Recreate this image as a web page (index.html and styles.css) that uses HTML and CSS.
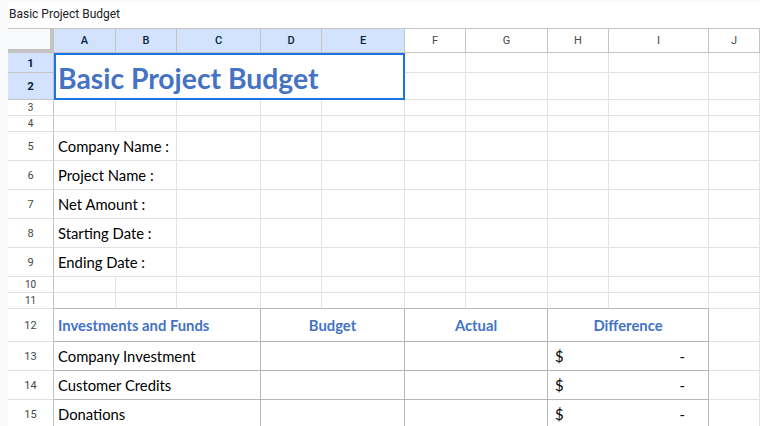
FILE: index.html
```html
<!DOCTYPE html>
<html>
<head>
<meta charset="utf-8">
<link rel="stylesheet" href="styles.css">
</head>
<body>
<div class="page">
  <div class="titlebar">Basic Project Budget</div>
  <div class="sheet">
    <!-- header row -->
    <div class="corner"></div>
    <div class="ch sel">A</div><div class="ch sel">B</div><div class="ch sel">C</div><div class="ch sel">D</div><div class="ch sel">E</div>
    <div class="ch">F</div><div class="ch">G</div><div class="ch">H</div><div class="ch">I</div><div class="ch">J</div>

    <!-- rows 1-2 -->
    <div class="rh sel">1</div>
    <div class="title-cell">Basic Project Budget</div>
    <div class="c"></div><div class="c"></div><div class="c"></div><div class="c"></div><div class="c"></div>
    <div class="rh sel">2</div>
    <div class="c"></div><div class="c"></div><div class="c"></div><div class="c"></div><div class="c"></div>

    <!-- row 3 -->
    <div class="rh small">3</div>
    <div class="c"></div><div class="c"></div><div class="c"></div><div class="c"></div><div class="c"></div><div class="c"></div><div class="c"></div><div class="c"></div><div class="c"></div><div class="c"></div>
    <!-- row 4 -->
    <div class="rh small">4</div>
    <div class="c"></div><div class="c"></div><div class="c"></div><div class="c"></div><div class="c"></div><div class="c"></div><div class="c"></div><div class="c"></div><div class="c"></div><div class="c"></div>

    <!-- rows 5-9 -->
    <div class="rh">5</div>
    <div class="c label span2">Company Name :</div><div class="c"></div><div class="c"></div><div class="c"></div><div class="c"></div><div class="c"></div><div class="c"></div><div class="c"></div><div class="c"></div>
    <div class="rh">6</div>
    <div class="c label span2">Project Name :</div><div class="c"></div><div class="c"></div><div class="c"></div><div class="c"></div><div class="c"></div><div class="c"></div><div class="c"></div><div class="c"></div>
    <div class="rh">7</div>
    <div class="c label span2">Net Amount :</div><div class="c"></div><div class="c"></div><div class="c"></div><div class="c"></div><div class="c"></div><div class="c"></div><div class="c"></div><div class="c"></div>
    <div class="rh">8</div>
    <div class="c label span2">Starting Date :</div><div class="c"></div><div class="c"></div><div class="c"></div><div class="c"></div><div class="c"></div><div class="c"></div><div class="c"></div><div class="c"></div>
    <div class="rh">9</div>
    <div class="c label span2">Ending Date :</div><div class="c"></div><div class="c"></div><div class="c"></div><div class="c"></div><div class="c"></div><div class="c"></div><div class="c"></div><div class="c"></div>

    <!-- row 10 -->
    <div class="rh small">10</div>
    <div class="c"></div><div class="c"></div><div class="c"></div><div class="c"></div><div class="c"></div><div class="c"></div><div class="c"></div><div class="c"></div><div class="c"></div><div class="c"></div>
    <!-- row 11 -->
    <div class="rh small">11</div>
    <div class="c tbb"></div><div class="c tbb"></div><div class="c tbb"></div><div class="c tbb"></div><div class="c tbb"></div><div class="c tbb"></div><div class="c tbb"></div><div class="c tbb"></div><div class="c tbb"></div><div class="c"></div>

    <!-- row 12 -->
    <div class="rh">12</div>
    <div class="c tb th span3">Investments and Funds</div>
    <div class="c tb th center span2">Budget</div>
    <div class="c tb th center span2">Actual</div>
    <div class="c tb th center span2">Difference</div>
    <div class="c"></div>

    <!-- rows 13-15 -->
    <div class="rh">13</div>
    <div class="c tb label span3">Company Investment</div>
    <div class="c tb span2"></div>
    <div class="c tb span2"></div>
    <div class="c tb span2 acct"><span>$</span><span>-</span></div>
    <div class="c"></div>

    <div class="rh">14</div>
    <div class="c tb label span3">Customer Credits</div>
    <div class="c tb span2"></div>
    <div class="c tb span2"></div>
    <div class="c tb span2 acct"><span>$</span><span>-</span></div>
    <div class="c"></div>

    <div class="rh">15</div>
    <div class="c tb label span3">Donations</div>
    <div class="c tb span2"></div>
    <div class="c tb span2"></div>
    <div class="c tb span2 acct"><span>$</span><span>-</span></div>
    <div class="c"></div>
  </div>
</div>
</body>
</html>
```

FILE: styles.css
```css
* { box-sizing: border-box; }
html, body { margin: 0; padding: 0; }
body {
  background: #f8f9fa;
  width: 760px;
  height: 426px;
  overflow: hidden;
}
.page {
  padding: 2px 0 0 8px;
}
.titlebar {
  background: #ffffff;
  height: 27px;
  padding-left: 1px;
  font-family: Roboto, "Liberation Sans", Arial, sans-serif;
  font-size: 12px;
  color: #202124;
  display: flex;
  align-items: center;
  padding-bottom: 3px;
  border-bottom: 1px solid #c4c4c4;
}
.sheet {
  background: #ffffff;
  display: grid;
  grid-template-columns: 46px 62px 61px 84px 61px 83px 61px 82px 61px 100px 51px;
  grid-template-rows: 24px 20px 27px 16px 16px 29px 29px 29px 29px 29px 16px 16px 33px 29px 29px 29px;
  font-family: Lato, "Noto Sans", sans-serif;
}
.corner {
  background: #f8f9fa;
  border-right: 4px solid #c4c4c4;
  border-bottom: 4px solid #c4c4c4;
}
.ch {
  border-right: 1px solid #c4c4c4;
  border-bottom: 1px solid #c4c4c4;
  font-family: Roboto, "Liberation Sans", Arial, sans-serif;
  font-size: 11px;
  color: #444746;
  display: flex;
  align-items: center;
  justify-content: center;
}
.ch.sel {
  background: #d3e3fd;
  color: #041e49;
  font-weight: 500;
}
.rh {
  border-right: 1px solid #c4c4c4;
  border-bottom: 1px solid #e1e1e1;
  font-family: Roboto, "Liberation Sans", Arial, sans-serif;
  font-size: 11px;
  color: #444746;
  display: flex;
  align-items: center;
  justify-content: center;
}
.rh.small { font-size: 10px; }
.rh.sel {
  background: #d3e3fd;
  color: #041e49;
  font-weight: 700;
  font-size: 11.5px;
  border-bottom-color: #c4c4c4;
}
.c {
  border-right: 1px solid #e2e2e2;
  border-bottom: 1px solid #e2e2e2;
  min-width: 0;
}
.title-cell {
  grid-column: 2 / span 5;
  grid-row: 2 / span 2;
  box-shadow: inset 0 0 0 2px #1a73e8;
  font-family: Lato, "Noto Sans", sans-serif;
  font-weight: 700;
  font-size: 28.3px;
  color: #4472c4;
  display: flex;
  align-items: flex-end;
  padding: 0 0 8px 4px;
  line-height: 1;
  white-space: nowrap;
}
.span2 { grid-column: span 2; }
.span3 { grid-column: span 3; }
.label {
  font-size: 14.8px;
  color: #000000;
  display: flex;
  align-items: flex-end;
  padding: 0 0 5px 4px;
  white-space: nowrap;
}
.tb {
  border-right-color: #b7b7b7;
  border-bottom-color: #b7b7b7;
}
.tbb {
  border-bottom-color: #b7b7b7;
}
.th {
  font-weight: 700;
  font-size: 14.8px;
  color: #4472c4;
  display: flex;
  align-items: center;
  padding: 0 0 1px 4px;
  white-space: nowrap;
}
.th.center {
  justify-content: center;
  padding-left: 0;
}
.acct {
  font-size: 14.8px;
  color: #000000;
  display: flex;
  align-items: flex-end;
  justify-content: space-between;
  padding: 0 23px 5px 7px;
}
```
